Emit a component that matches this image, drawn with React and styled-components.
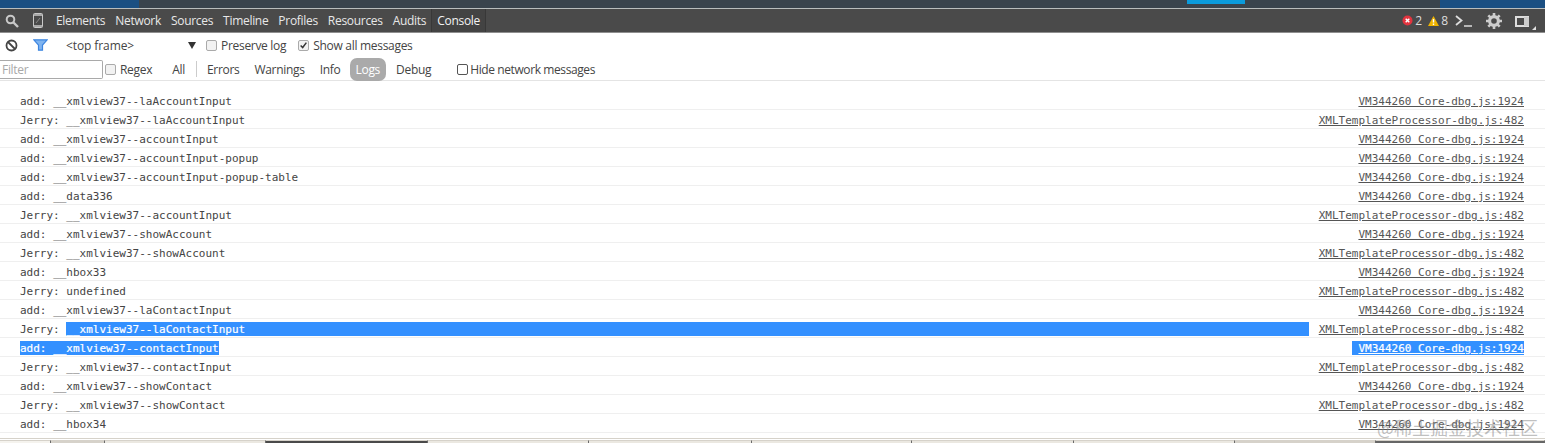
import styled, { createGlobalStyle } from "styled-components";

const GlobalStyle = createGlobalStyle`
html, body {
  margin: 0;
  padding: 0;
  background: #fff;
  overflow: hidden;
}
`
const Page = styled.div`
position: relative;
width: 1545px;
height: 443px;
overflow: hidden;
display: flex;
flex-direction: column;
font-family: "Open Sans", "Noto Sans", sans-serif;
font-size: 12px;
letter-spacing: -0.3px;
color: #333;
`
const TopStrip = styled.div`
height: 8px;
display: flex;
background: #3a444d;
border-bottom: 1px solid #b9bdbd;
flex: none;
`
const Segment = styled.div`
width: ${p => p.$w}px;
height: ${p => p.$h || 8}px;
background: ${p => p.$bg};
flex: ${p => p.$grow ? 1 : "none"};
`
const DevBar = styled.div`
height: 23px;
background: #4a4a4a;
border-bottom: 1px solid #8f8f8f;
display: flex;
align-items: center;
padding-left: 4px;
color: #e8e8e8;
flex: none;
`
const IconSlot = styled.span`
display: inline-flex;
align-items: center;
justify-content: center;
width: ${p => p.$w}px;
flex: none;
`
const Tabs = styled.div`
display: flex;
height: 100%;
margin-left: -5px;
`
const Tab = styled.div`
display: flex;
align-items: center;
padding: 0 5px;
white-space: nowrap;
${p => p.$active && `
background: #434343;
border-left: 1px solid #383838;
border-right: 1px solid #383838;
color: #f2f2f2;
`}
`
const DevRight = styled.div`
margin-left: auto;
padding-right: 8px;
display: flex;
align-items: center;
height: 100%;
`
const Count = styled.span`
font-size: 12px;
letter-spacing: 0;
margin: 0 ${p => p.$mr || 0}px 0 2px;
color: #ddd;
`
const ToolRow = styled.div`
height: 24px;
box-sizing: border-box;
display: flex;
align-items: center;
flex: none;
background: #fff;
${p => p.$line && "border-bottom: 1px solid #e4e4e4; padding-top: 1px;"}
`
const FrameSelect = styled.div`
width: 129px;
margin-left: 8px;
display: flex;
justify-content: space-between;
align-items: center;
color: #444;
letter-spacing: -0.1px;
`
const Arrow = styled.span`
width: 0;
height: 0;
border-left: 4px solid transparent;
border-right: 4px solid transparent;
border-top: 7px solid #333;
margin-right: -1px;
`
const CheckLabel = styled.label`
display: flex;
align-items: center;
gap: ${p => p.$gap || 4}px;
margin-left: ${p => p.$ml}px;
color: #444;
white-space: nowrap;
`
const Box = styled.span`
width: 11px;
height: 11px;
box-sizing: border-box;
border: 1px solid ${p => p.$dark ? "#555" : "#aaa"};
border-radius: 2px;
background: ${p => p.$dark ? "#fff" : "#f2f2f2"};
display: inline-flex;
align-items: center;
justify-content: center;
flex: none;
`
const HideText = styled.span`
letter-spacing: -0.4px;
`
const FilterInput = styled.div`
width: 103px;
height: 19px;
box-sizing: border-box;
border: 1px solid #a9a9a9;
border-left: none;
border-radius: 0 2px 2px 0;
padding-left: 2px;
line-height: 18px;
color: #a8a8a8;
flex: none;
`
const Levels = styled.div`
display: flex;
align-items: center;
margin-left: 20px;
`
const Level = styled.span`
color: ${p => p.$active ? "#fff" : "#444"};
background: ${p => p.$active ? "#aaa" : "transparent"};
border-radius: 7px;
padding: ${p => p.$active ? "3px 6px" : "0"};
margin-left: ${p => p.$ml || 0}px;
line-height: 17px;
`
const Divider = styled.span`
width: 1px;
height: 16px;
background: #ccc;
margin-left: 11px;
`
const Console = styled.div`
flex: 1;
padding-top: 10px;
font-family: "DejaVu Sans Mono", monospace;
font-size: 11px;
letter-spacing: 0;
background: #fff;
`
const Row = styled.div`
height: 19px;
box-sizing: border-box;
border-bottom: 1px solid #efefef;
padding: 2px 21px 0 20px;
display: flex;
align-items: center;
color: #444;
white-space: pre;
`
const Message = styled.span`
flex: ${p => p.$fill ? 1 : "none"};
margin-right: ${p => p.$fill ? 10 : 0}px;
display: flex;
height: 14px;
line-height: 15px;
${p => p.$selected && "background: #3390ff; color: #fff; -webkit-text-stroke: 0.2px #fff;"}
`
const Value = styled.span`
flex: ${p => p.$fill ? 1 : "none"};
${p => p.$selected && "background: #3390ff; color: #fff; -webkit-text-stroke: 0.2px #fff;"}
`
const Source = styled.span`
margin-left: auto;
padding-left: ${p => p.$selected ? 6 : 0}px;
line-height: 15px;
height: 14px;
color: ${p => p.$selected ? "#fff" : "#555"};
background: ${p => p.$selected ? "#3390ff" : "transparent"};
text-decoration: underline;
${p => p.$selected && "-webkit-text-stroke: 0.2px #fff;"}
`
const Taskbar = styled.div`
height: 5px;
box-sizing: border-box;
border-top: 1px solid #d6d2ca;
padding-top: 1px;
background: #fff;
display: flex;
flex: none;
`
const TaskItem = styled.div`
width: ${p => p.$w}px;
flex: ${p => p.$grow ? 1 : "none"};
background: ${p => p.$bg};
border-top: 1px solid #d6d2ca;
border-right: 1px solid #6a6a6a;
`
const Watermark = styled.div`
position: absolute;
right: 7px;
bottom: 5px;
font-family: "Noto Sans CJK SC", sans-serif;
font-size: 18px;
line-height: 22px;
letter-spacing: 0;
color: rgba(130, 130, 130, 0.5);
white-space: nowrap;
`

const VM = "VM344260 Core-dbg.js:1924"
const XML = "XMLTemplateProcessor-dbg.js:482"

const rows = [
    ["add: ", "__xmlview37--laAccountInput", VM],
    ["Jerry: ", "__xmlview37--laAccountInput", XML],
    ["add: ", "__xmlview37--accountInput", VM],
    ["add: ", "__xmlview37--accountInput-popup", VM],
    ["add: ", "__xmlview37--accountInput-popup-table", VM],
    ["add: ", "__data336", VM],
    ["Jerry: ", "__xmlview37--accountInput", XML],
    ["add: ", "__xmlview37--showAccount", VM],
    ["Jerry: ", "__xmlview37--showAccount", XML],
    ["add: ", "__hbox33", VM],
    ["Jerry: ", "undefined", XML],
    ["add: ", "__xmlview37--laContactInput", VM],
    ["Jerry: ", "__xmlview37--laContactInput", XML, "value"],
    ["add: ", "__xmlview37--contactInput", VM, "all"],
    ["Jerry: ", "__xmlview37--contactInput", XML],
    ["add: ", "__xmlview37--showContact", VM],
    ["Jerry: ", "__xmlview37--showContact", XML],
    ["add: ", "__hbox34", VM],
]

const tabs = ["Elements", "Network", "Sources", "Timeline", "Profiles", "Resources", "Audits"]

const Tick = () => (
    <svg width="11" height="11" viewBox="0 0 11 11">
        <path d="M2 5.5 L4.5 8 L9 2" fill="none" stroke="#333" strokeWidth="1.8" />
    </svg>
)

const App = () => {
    return (
        <>
            <GlobalStyle />
            <Page>
                <TopStrip>
                    <Segment $w={139} $bg="#1b4f82" />
                    <Segment $w={1048} $bg="#3a444d" />
                    <Segment $w={58} $h={4} $bg="#0a9bdc" />
                    <Segment $grow $bg="#3a444d" />
                    <Segment $w={105} $bg="#1b4f82" />
                </TopStrip>
                <DevBar>
                    <IconSlot $w={15}>
                        <svg width="14" height="14" viewBox="0 0 14 14">
                            <circle cx="5.5" cy="5.5" r="3.8" fill="none" stroke="#c8c8c8" strokeWidth="2" />
                            <path d="M8.5 8.5 L13 13" stroke="#c8c8c8" strokeWidth="2.4" />
                        </svg>
                    </IconSlot>
                    <IconSlot $w={37}>
                        <svg width="10" height="15" viewBox="0 0 10 15">
                            <rect x="0.5" y="0.5" width="9" height="14" rx="1" fill="none" stroke="#c8c8c8" />
                            <path d="M1 2 H9 M1 13 H9" stroke="#c8c8c8" strokeWidth="1.5" />
                            <path d="M3 10 L7 5" stroke="#8a8a8a" />
                        </svg>
                    </IconSlot>
                    <Tabs>
                        {tabs.map(t => <Tab key={t}>{t}</Tab>)}
                        <Tab $active>Console</Tab>
                    </Tabs>
                    <DevRight>
                        <svg width="11" height="11" viewBox="0 0 11 11">
                            <circle cx="5.5" cy="5.5" r="5" fill="#e2343f" />
                            <path d="M3.7 3.7 L7.3 7.3 M7.3 3.7 L3.7 7.3" stroke="#fff" strokeWidth="1.4" />
                        </svg>
                        <Count $mr={6}>2</Count>
                        <svg width="11" height="10" viewBox="0 0 11 10">
                            <path d="M5.5 0 L11 10 H0 Z" fill="#f0b400" />
                            <path d="M5.5 3 V6.5 M5.5 7.5 V9" stroke="#fff" strokeWidth="1.4" />
                        </svg>
                        <Count $mr={7}>8</Count>
                        <svg width="17" height="12" viewBox="0 0 17 12">
                            <path d="M1 1 L6.5 5.5 L1 10" fill="none" stroke="#ddd" strokeWidth="1.8" />
                            <path d="M9 11 H17" stroke="#ddd" strokeWidth="1.5" />
                        </svg>
                        <IconSlot $w={43}>
                            <svg width="16" height="16" viewBox="0 0 16 16">
                                <circle cx="8" cy="8" r="4.4" fill="none" stroke="#ccc" strokeWidth="3.2" />
                                <path d="M8 0 V3 M8 13 V16 M0 8 H3 M13 8 H16 M2.3 2.3 L4.4 4.4 M11.6 11.6 L13.7 13.7 M13.7 2.3 L11.6 4.4 M4.4 11.6 L2.3 13.7" stroke="#ccc" strokeWidth="2.6" />
                            </svg>
                        </IconSlot>
                        <IconSlot $w={22}>
                            <svg width="22" height="19" viewBox="0 0 22 19">
                                <rect x="1" y="6" width="12" height="9" fill="none" stroke="#ddd" strokeWidth="2" />
                                <rect x="9" y="6" width="5" height="9" fill="#ccc" />
                                <path d="M17 19 H21 V15 Z" fill="#e0e0e0" />
                            </svg>
                        </IconSlot>
                    </DevRight>
                </DevBar>
                <ToolRow>
                    <IconSlot $w={23}>
                        <svg width="13" height="13" viewBox="0 0 13 13">
                            <circle cx="6.5" cy="6.5" r="5" fill="none" stroke="#444" strokeWidth="1.8" />
                            <path d="M3 3 L10 10" stroke="#444" strokeWidth="1.8" />
                        </svg>
                    </IconSlot>
                    <IconSlot $w={35}>
                        <svg width="15" height="12" viewBox="0 0 15 12">
                            <path d="M0.8 0.8 H14.2 L9.5 6 V11.2 H5.5 V6 Z" fill="#7fb4f0" stroke="#3d85e0" strokeWidth="1.2" />
                        </svg>
                    </IconSlot>
                    <FrameSelect>
                        <span>&lt;top frame&gt;</span>
                        <Arrow />
                    </FrameSelect>
                    <CheckLabel $ml={11}><Box />Preserve log</CheckLabel>
                    <CheckLabel $ml={12}><Box><Tick /></Box>Show all messages</CheckLabel>
                </ToolRow>
                <ToolRow $line>
                    <FilterInput>Filter</FilterInput>
                    <CheckLabel $ml={2}><Box />Regex</CheckLabel>
                    <Levels>
                        <Level>All</Level>
                        <Divider />
                        <Level $ml={10}>Errors</Level>
                        <Level $ml={15}>Warnings</Level>
                        <Level $ml={15}>Info</Level>
                        <Level $ml={9} $active>Logs</Level>
                        <Level $ml={10}>Debug</Level>
                    </Levels>
                    <CheckLabel $ml={26} $gap={2}><Box $dark /><HideText>Hide network messages</HideText></CheckLabel>
                </ToolRow>
                <Console>
                    {rows.map(([prefix, value, source, selected], i) => (
                        <Row key={i}>
                            {selected === "all" ? (
                                <Message $selected>{prefix}{value}</Message>
                            ) : (
                                <Message $fill={selected === "value"}>
                                    <span>{prefix}</span>
                                    <Value $fill={selected === "value"} $selected={selected === "value"}>{value}</Value>
                                </Message>
                            )}
                            <Source $selected={selected === "all"}>{source}</Source>
                        </Row>
                    ))}
                </Console>
                <Taskbar>
                    <TaskItem $w={50} $bg="#f5f3ee" />
                    <TaskItem $w={53} $bg="#d6d2ca" />
                    <TaskItem $w={160} $bg="#ebe8e1" />
                    <TaskItem $w={161} $bg="#4a4a4a" />
                    <TaskItem $w={160} $bg="#ebe8e1" />
                    <TaskItem $w={162} $bg="#ebe8e1" />
                    <TaskItem $w={159} $bg="#ebe8e1" />
                    <TaskItem $w={161} $bg="#ebe8e1" />
                    <TaskItem $w={160} $bg="#ebe8e1" />
                    <TaskItem $w={140} $bg="#d6d2ca" />
                    <TaskItem $grow $bg="#666666" />
                </Taskbar>
                <Watermark>@稀土掘金技术社区</Watermark>
            </Page>
        </>
    )
}

export default App;
